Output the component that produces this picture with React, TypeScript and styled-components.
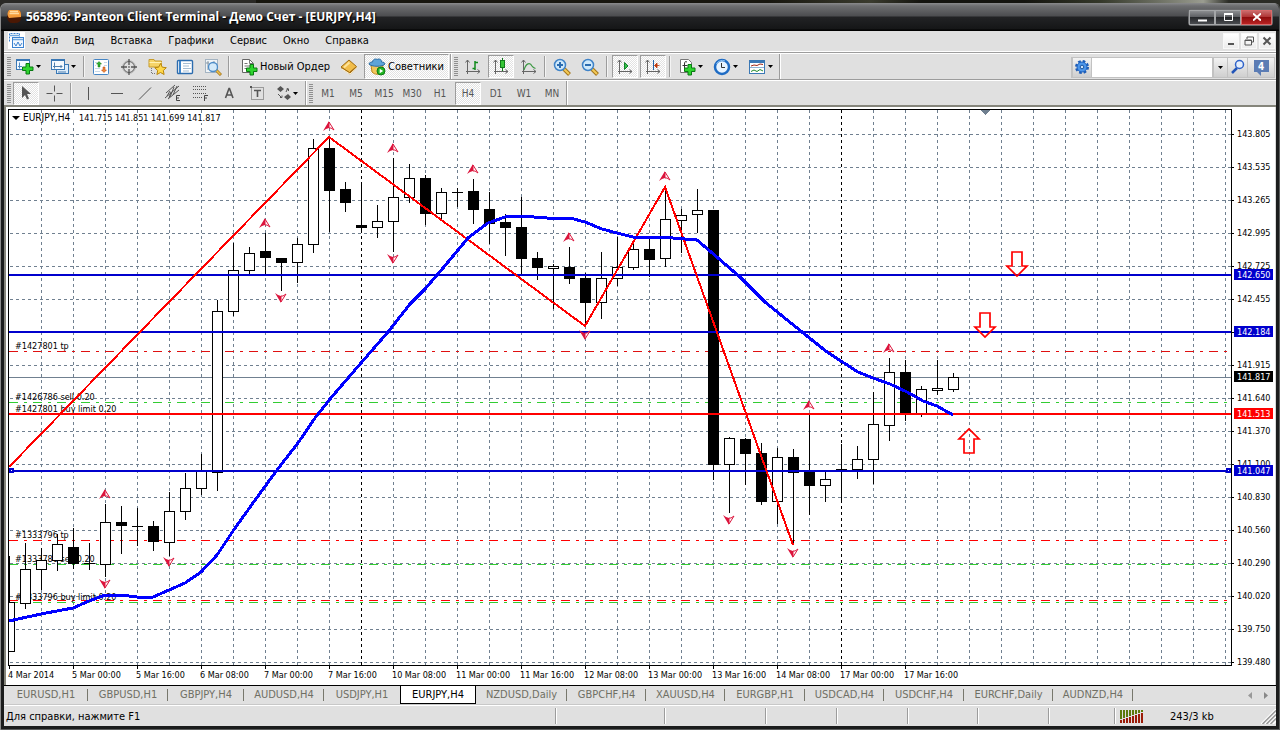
import React from "react";
import styled, { createGlobalStyle, css } from "styled-components";

const UI = '"DejaVu Sans Condensed", "DejaVu Sans", "Noto Sans", sans-serif';
const FACE = "#e0e0e0";
const SHADE = "#9c9c9c";

const GlobalStyle = createGlobalStyle`
  * { box-sizing: border-box; }
  html, body, #root { margin: 0; min-height: 100%; }
  body { background: #1c1c1c; font-family: ${UI}; font-size: 11px; color: #000; }
  button, input { font: inherit; color: inherit; margin: 0; padding: 0; border: 0; background: none; }
  svg { display: block; flex: none; }
`;

/* ---------- window frame ---------- */

const Desktop = styled.div`
  min-height: 100vh;
  padding-top: 3px;
  display: flex;
  flex-direction: column;
  background: linear-gradient(90deg, #2a2926 0 20%, #17160f 20% 60%, #3a3b2e 68%, #14140f 72% 80%, #34382a 86%, #9a9c90 94%, #2b2c26 96%);
`;
const Frame = styled.div`
  flex: 1;
  display: flex;
  flex-direction: column;
  padding: 0 4px 4px;
  border-radius: 6px 6px 0 0;
  background: #1b1c1c;
  box-shadow: inset 1px 1px 0 #8c8c8c, inset -1px -1px 0 #5a5c5c;
`;
const TitleBar = styled.header`
  height: 28px;
  margin: 0 -3px;
  padding: 0 5px;
  display: flex;
  align-items: center;
  gap: 2px;
  border-radius: 6px 6px 0 0;
  background: linear-gradient(#8a8b8d 0, #6d6e70 3px, #4c4d50 13px, #222325 14px, #151617 26px, #000 27px);
`;
const Title = styled.h1`
  margin: 0;
  flex: 1;
  font-family: "Open Sans", "Noto Sans", sans-serif;
  font-size: 12px;
  line-height: 16px;
  font-weight: 700;
  color: #fff;
  text-shadow: 1px 1px 1px #000;
  white-space: nowrap;
`;
const Controls = styled.div`
  display: flex;
  margin-right: 1px;
  border: 1px solid #6a6b6d;
  border-radius: 3px;
`;
const ControlButton = styled.button<{ $close?: boolean }>`
  width: ${(p) => (p.$close ? 31 : 26)}px;
  height: 15px;
  display: grid;
  place-items: center;
  border: 1px solid ${(p) => (p.$close ? "#d86a6a" : "#a4a6a8")};
  background: ${(p) =>
    p.$close
      ? "linear-gradient(#c96a6a 0, #b03434 45%, #8f0d0d 50%, #b82222 100%)"
      : "linear-gradient(#8b8d90 0, #5d5f63 45%, #26282b 50%, #4a4c50 100%)"};
`;

/* ---------- menu ---------- */

const MenuBar = styled.nav`
  height: 22px;
  padding: 0 1px 2px 4px;
  display: flex;
  align-items: center;
  background: ${FACE};
  border-bottom: 1px solid ${SHADE};
  box-shadow: inset 0 -1px 0 #fff;
`;
const MenuItems = styled.div`
  flex: 1;
  display: flex;
  gap: 16px;
  padding-left: 6px;
`;
const MenuItem = styled.button`
  font-size: 11px;
  line-height: 16px;
`;
const MdiButton = styled.button`
  width: 16px;
  height: 16px;
  margin-left: 2px;
  display: grid;
  place-items: center;
  background: linear-gradient(#fff, #ececec);
  border: 1px solid #f8f8f8;
`;

/* ---------- toolbars ---------- */

const ToolRow = styled.div`
  height: 27px;
  display: flex;
  align-items: stretch;
  background: ${FACE};
  border-top: 1px solid #fff;
  border-bottom: 1px solid ${SHADE};
`;
const ToolRowLast = styled(ToolRow)`
  border-bottom: 2px solid #85857b;
`;
const Band = styled.div`
  display: flex;
  align-items: center;
  padding-left: 3px;
  border-right: 1px solid ${SHADE};
  box-shadow: 1px 0 0 #fff;
`;
const BandNext = styled(Band)`
  padding-left: 3px;
`;
const Grip = styled.span`
  width: 4px;
  height: 19px;
  margin-right: 1px;
  background: repeating-linear-gradient(#8f8f8f 0 1px, ${FACE} 1px 2px);
`;
const Sep = styled.span<{ $wide?: boolean }>`
  width: 2px;
  height: 21px;
  margin: ${(p) => (p.$wide ? "0 3px 0 2px" : "0 2px 0 1px")};
  background: linear-gradient(90deg, ${SHADE} 0 1px, #f4f4f4 1px 2px);
`;
const pressed = css`
  background: repeating-conic-gradient(#ffffff 0 25%, #e2e2e2 0 50%) 0 0 / 2px 2px;
  border: 1px solid;
  border-color: ${SHADE} #fff #fff ${SHADE};
`;
const ToolButton = styled.button<{ $pressed?: boolean }>`
  width: 26px;
  height: 23px;
  margin: 0 1px;
  display: flex;
  align-items: center;
  justify-content: center;
  border: 1px solid transparent;
  color: #555;
  ${(p) => p.$pressed && pressed}
`;
const PeriodButton = styled(ToolButton)`
  font-size: 10px;
`;
const DropButton = styled.button<{ $compact?: boolean }>`
  width: ${(p) => (p.$compact ? 34 : 35)}px;
  height: 23px;
  padding-left: 4px;
  display: flex;
  align-items: center;
  gap: ${(p) => (p.$compact ? 0 : 2)}px;
`;
const LabelButton = styled.button<{ $pressed?: boolean }>`
  height: 25px;
  padding: 0 ${(p) => (p.$pressed ? 4 : 5)}px 0 ${(p) => (p.$pressed ? 3 : 8)}px;
  margin: 0 ${(p) => (p.$pressed ? 1 : 0)}px;
  display: flex;
  align-items: center;
  gap: 2px;
  font-size: 11px;
  white-space: nowrap;
  ${(p) => p.$pressed && pressed}
`;
const SearchGroup = styled.div`
  margin: 1px 1px 0 auto;
  height: 21px;
  align-self: center;
  display: flex;
  border: 1px solid #c2c2c2;
`;
const SearchInput = styled.input`
  width: 122px;
  background: #fff;
  border: solid #c2c2c2;
  border-width: 0 1px;
`;
const SearchButton = styled.button<{ $w: number }>`
  width: ${(p) => p.$w}px;
  display: grid;
  place-items: center;
  background: linear-gradient(#f2f2f2, #cfcfcf);
  border-left: 1px solid #c2c2c2;
`;

/* ---------- chart, tabs, status ---------- */

const ChartPane = styled.main`
  flex: 1;
  background: #fff;
  border-left: 2px solid #85857b;
  border-right: 1px solid #d8d8d8;
`;
const ChartSvg = styled.svg`
  width: 100%;
  height: auto;
  font-family: ${UI};
  font-size: 9px;
`;
const TabStrip = styled.div`
  height: 20px;
  display: flex;
  background: ${FACE};
  border-top: 1px solid #000;
  box-shadow: inset 0 -1px 0 #c8c8c8;
`;
const Tab = styled.button<{ $w: number; $active?: boolean; $bare?: boolean }>`
  width: ${(p) => p.$w}px;
  height: 18px;
  position: relative;
  font-size: 11px;
  line-height: 16px;
  color: #6f6f64;
  white-space: nowrap;
  &::after {
    content: "";
    position: absolute;
    right: 0;
    top: 3px;
    width: 1px;
    height: 12px;
    background: ${(p) => (p.$bare ? "none" : "#77776c")};
  }
  ${(p) =>
    p.$active &&
    css`
      color: #000;
      background: #fff;
      border: solid #000;
      border-width: 0 1px 1px;
      &::after { content: none; }
    `}
`;
const TabScroll = styled.div`
  margin: 0 8px 0 auto;
  display: flex;
  align-items: center;
  gap: 12px;
`;
const StatusBar = styled.footer`
  height: 21px;
  display: flex;
  align-items: center;
  background: ${FACE};
  border-top: 1px solid #fff;
`;
const StatusText = styled.span`
  flex: 1;
  padding-left: 2px;
  font-size: 11px;
`;
const StatusCell = styled.span<{ $w: number }>`
  width: ${(p) => p.$w}px;
  height: 16px;
  display: flex;
  align-items: center;
  border-left: 1px solid ${SHADE};
  box-shadow: inset 1px 0 0 #fff;
`;
const Traffic = styled.span`
  flex: 1;
  padding-left: 27px;
`;
const SizeGrip = styled.svg`
  align-self: flex-end;
`;

/* ---------- icons ---------- */

const Svg = ({ w = 18, h = 18, children }: { w?: number; h?: number; children: React.ReactNode }) => (
  <svg width={w} height={h} viewBox={`0 0 ${w} ${h}`} fill="none" aria-hidden="true">
    {children}
  </svg>
);
const Caret = () => (
  <Svg w={5} h={3}>
    <path d="M0 0h5L2.500 3z" fill="#000" />
  </Svg>
);
const Plus = ({ x, y }: { x: number; y: number }) => (
  <path
    transform={`translate(${x} ${y})`}
    d="M4 .5h3.500V4H11v3.500H7.500V11H4V7.500H.5V4H4z"
    fill="#2ed42e"
    stroke="#087a12"
  />
);
const Axes = () => (
  <path d="M3.500 16V2M1.500 4.500l2-2.500 2 2.500M2 13.500h14M13.500 11.500l2.500 2-2.500 2" stroke="#666" />
);
const Lens = ({ plus }: { plus?: boolean }) => (
  <Svg>
    <path d="M11 11l5.500 5.500" stroke="#a4761c" strokeWidth="4" />
    <path d="M11 11l5 5" stroke="#f4ca58" strokeWidth="2" />
    <circle cx="7" cy="7" r="5.500" fill="#cfe9fb" stroke="#3f83c8" strokeWidth="1.500" />
    <path d={plus ? "M4 7h6M7 4v6" : "M4 7h6"} stroke="#2b6cb0" strokeWidth="2" />
  </Svg>
);

const icons = {
  chartNew: (
    <Svg>
      <rect x=".5" y="1.500" width="13" height="10" fill="#f2f9ff" stroke="#3a78b5" />
      <path d="M1 2.500h12" stroke="#3a78b5" />
      <path d="M3.500 4.500v6M2 8.500h4" stroke="#4e88c0" />
      <Plus x={6} y={5} />
    </Svg>
  ),
  profiles: (
    <Svg>
      <rect x="5.500" y="6.500" width="12" height="9" fill="#dcecfa" stroke="#3a78b5" />
      <rect x=".5" y="1.500" width="13" height="10" fill="#f5faff" stroke="#3a78b5" />
      <path d="M1 2.500h12" stroke="#3a78b5" />
      <path d="M3.500 4.500v6M2 8.500h9M9.500 7L11 8.500 9.500 10M7 14h8" stroke="#4f7fae" />
    </Svg>
  ),
  market: (
    <Svg>
      <rect x="1.500" y="1.500" width="15" height="15" rx="1" fill="#fff" stroke="#4585c4" />
      <path d="M3 4.500h2M3 7.500h1M3 10.500h5M3 13.500h5M12 4.500h3M12 7.500h3" stroke="#c6d8e8" />
      <path d="M7 3.500l2.500 2.500H8v3H6V6H4.500z" fill="#2fb12f" stroke="#147614" strokeWidth=".5" />
      <path d="M12 14.500L9.500 12H11V9h2v3h1.500z" fill="#f08a3a" stroke="#b53f0c" strokeWidth=".5" />
    </Svg>
  ),
  target: (
    <Svg>
      <circle cx="9" cy="9" r="5.500" stroke="#555" />
      <circle cx="9" cy="9" r="6.500" stroke="#aaa" strokeWidth=".6" />
      <path d="M9 1v6M9 11v6M1 9h6M11 9h6" stroke="#555" strokeWidth="1.300" />
      <circle cx="9" cy="9" r="1" fill="#777" />
    </Svg>
  ),
  favorites: (
    <Svg w={19}>
      <path d="M1 1.500h5l1 1.500h6.500v6H1z" fill="#f6d468" stroke="#c79c2c" />
      <path d="M1.500 4.500h12" stroke="#fff2b4" />
      <path d="M3.500 10v5.500H8" stroke="#777" strokeDasharray="1 1" />
      <path d="M12.500 5.500l1.800 3.700 4 .5-3 2.800.8 4-3.600-2-3.600 2 .8-4-3-2.800 4-.5z" fill="#ffd84a" stroke="#b8860b" />
    </Svg>
  ),
  navigator: (
    <Svg>
      <rect x="1.500" y="2.500" width="15" height="13" rx="1" fill="#fff" stroke="#2c6cae" strokeWidth="1.400" />
      <path d="M4 3v12" stroke="#3f86ca" strokeWidth="2" />
      <path d="M7 5.500h8M7 8h6M7 10.500h8M7 13h6" stroke="#a6bdd2" />
    </Svg>
  ),
  tester: (
    <Svg>
      <rect x="1.500" y="1.500" width="12" height="13" fill="#f0f4f7" stroke="#a4b4c2" />
      <path d="M4 3v9M2 5h3M10 3v3" stroke="#8796a3" />
      <path d="M12 12l5 5" stroke="#a4761c" strokeWidth="3" />
      <path d="M12 12l4.500 4.500" stroke="#f0c14b" strokeWidth="1.500" />
      <circle cx="9" cy="9" r="4.500" fill="#cfe8fa" fillOpacity=".85" stroke="#4d8cc8" strokeWidth="1.300" />
    </Svg>
  ),
  order: (
    <Svg>
      <path d="M2.500 1.500h7l4 4v9h-11z" fill="#fff" stroke="#666" />
      <path d="M9.500 1.500v4h4M4.500 5.500h3M4.500 8h6M4.500 10.500h4" stroke="#777" />
      <Plus x={6} y={6} />
    </Svg>
  ),
  book: (
    <Svg>
      <path d="M1 10L9 2.500l8 7-7 7z" fill="#a86e14" />
      <path d="M1 9l8-7 7.500 6.500-7 6z" fill="#f1bd4a" stroke="#a06c12" />
      <path d="M4 9.500l5.500-5" stroke="#fde39a" strokeWidth="2" />
      <path d="M2 11l8 5 7-6.500" stroke="#fff3cf" />
    </Svg>
  ),
  expert: (
    <Svg>
      <path d="M3 7h12l-1 7c-3 3-7 3-10 0z" fill="#f2c65b" stroke="#b9851c" />
      <path d="M1 6c0-1.500 2-2 3.500-2C5 1 7.500.5 9 1.500 11 .5 13.500 1 13.500 4 15.500 4 17 5 17 6c-2 3-14 3-16 0z" fill="#5ea4d8" stroke="#2d6da3" />
      <circle cx="13" cy="13" r="4" fill="#22b422" stroke="#0c7a14" />
      <path d="M11.700 10.700v4.600l3.500-2.300z" fill="#fff" />
    </Svg>
  ),
  bars: (
    <Svg>
      <Axes />
      <path d="M11 3v9M8.500 10.500H11M11 4.500h3" stroke="#128a1c" strokeWidth="1.500" />
    </Svg>
  ),
  candles: (
    <Svg>
      <Axes />
      <path d="M10.500 0v13" stroke="#117a1a" />
      <rect x="8.500" y="2.500" width="4" height="7" fill="#35c535" stroke="#117a1a" />
    </Svg>
  ),
  line: (
    <Svg>
      <Axes />
      <path d="M4 12c2-7 6-8 8-4 1 1.500 2 2 3.500 2.500" stroke="#3f9a46" strokeWidth="1.300" />
    </Svg>
  ),
  zoomIn: <Lens plus />,
  zoomOut: <Lens />,
  autoscroll: (
    <Svg>
      <Axes />
      <path d="M8.500 4.500v7L12 8z" fill="#35c04a" stroke="#128228" />
    </Svg>
  ),
  shift: (
    <Svg>
      <Axes />
      <path d="M9.500 2v10" stroke="#2464a8" />
      <path d="M15.500 7.500H11M13 5v5l-2.500-2.500z" fill="#bf3a0c" stroke="#bf3a0c" strokeWidth=".8" />
    </Svg>
  ),
  indicators: (
    <Svg>
      <path d="M2.500 1.500h8l3 3v10h-11z" fill="#fff" stroke="#777" />
      <path d="M9 4c-2-1-2.500 0-2.500 2v6M4.500 7.500h5" stroke="#333" />
      <Plus x={6} y={6} />
    </Svg>
  ),
  clock: (
    <Svg>
      <circle cx="9" cy="9" r="7" fill="#e8f4ff" stroke="#1f6cc4" strokeWidth="2.500" />
      <path d="M3.500 6A6.500 6.500 0 0 1 12 3" stroke="#8fc4f4" />
      <path d="M8.500 5v4.500H12" stroke="#333" />
    </Svg>
  ),
  template: (
    <Svg>
      <rect x="1.500" y="2.500" width="15" height="13" fill="#fff" stroke="#3a78b5" />
      <path d="M2 4h14" stroke="#3a78b5" strokeWidth="2" />
      <path d="M2 9.500h14" stroke="#8fb4d6" />
      <path d="M3 8l3-1 3 .5L12 6l3 .5" stroke="#a02818" />
      <path d="M3 13.500l3-1.500 3 1.500 3-2 3 1.500" stroke="#218a2a" />
    </Svg>
  ),
  cursor: (
    <Svg>
      <path d="M5 2v12l3-3 2 4.500 2-1-2-4.500h4z" fill="#555" />
    </Svg>
  ),
  cross: (
    <Svg>
      <path d="M9.500 1.500v6M9.500 11.500v6M1.500 9.500h6M11.500 9.500h6" stroke="#555" />
    </Svg>
  ),
  vline: (
    <Svg>
      <path d="M8.500 3v13" stroke="#555" />
    </Svg>
  ),
  hline: (
    <Svg>
      <path d="M3 9.500h12" stroke="#555" />
    </Svg>
  ),
  trend: (
    <Svg>
      <path d="M3 15.500L15 3.500" stroke="#555" />
    </Svg>
  ),
  channel: (
    <Svg>
      <path d="M1 14L15 2M2 9l9-8M4 15l11-9M3 12l3-5M6 13l4-10M9 11l4-9M5 14l2-6" stroke="#555" />
      <path d="M16 11.500h-3.500v5H16M12.500 14H15" stroke="#444" />
    </Svg>
  ),
  fibo: (
    <Svg>
      <path d="M1 2.500h14M1 5.500h14M1 9.500h14M1 13.500h9" stroke="#555" strokeDasharray="1 1" />
      <path d="M16 11.500h-3.500V17M12.500 14H15" stroke="#444" />
    </Svg>
  ),
  letter: (
    <Svg>
      <path d="M5.500 14L9 4.500h.5L13 14M6.800 11h5" stroke="#555" strokeWidth="1.600" />
    </Svg>
  ),
  label: (
    <Svg>
      <rect x="3.500" y="3.500" width="12" height="12" stroke="#555" strokeDasharray="1 1" />
      <path d="M2 2h2v2H2z" fill="#555" />
      <path d="M6 6.500h7M9.500 6.500V13" stroke="#555" strokeWidth="1.600" />
    </Svg>
  ),
  shapes: (
    <Svg>
      <path d="M5.500 2L9 5 5.500 8 2 5zM13 10l3 3-3.500 3L9 13z" fill="#555" />
      <path d="M3 10l3 3M5 13.500h2v-2M11 8l2-4M11.500 5h2v2" stroke="#555" />
    </Svg>
  ),
  gear: (
    <Svg>
      <circle cx="9" cy="9" r="5.500" stroke="#1d5cb8" strokeWidth="3" strokeDasharray="2.500 1.820" />
      <circle cx="9" cy="9" r="5" fill="#4d96ea" stroke="#1e62be" />
      <circle cx="9" cy="9" r="1.800" fill="#cfe4fa" stroke="#1b559f" />
    </Svg>
  ),
  search: (
    <Svg w={16} h={16}>
      <path d="M7 9l-5 5" stroke="#2255b8" strokeWidth="2.500" />
      <circle cx="9.500" cy="5.500" r="4" fill="#e4eefc" stroke="#2f62c8" strokeWidth="1.500" />
    </Svg>
  ),
  appLogo: (
    <Svg>
      <path d="M3 2h9q3 0 3 5v3q0 5-6 5H6q-4 0-5-6z" fill="#4a1804" />
      <path d="M3 2h9q3 0 3 5v2L3 10Q0 6 3 2z" fill="#f59b3a" />
      <path d="M4 3.500h8M3.500 5.500H13" stroke="#ffd9a0" strokeWidth="1.300" />
    </Svg>
  ),
  chartWindow: (
    <Svg w={17} h={17}>
      <rect width="17" height="17" fill="#fff" />
      <path d="M1.500 9.500v-8h10v4" stroke="#3b82d0" strokeDasharray="2 1" />
      <rect x="4.500" y="5.500" width="11" height="10" fill="#f2f8ff" stroke="#3b82d0" />
      <path d="M2 3.500h9M5 7.500h10" stroke="#6fa8e0" strokeWidth="1.500" />
      <path d="M6 11l2 3 2-4 2 4 2-3" stroke="#3b82d0" />
    </Svg>
  ),
};
type IconName = keyof typeof icons;

const Tool = ({ icon, label, on }: { icon: IconName; label: string; on?: boolean }) => (
  <ToolButton $pressed={on} aria-label={label} aria-pressed={on}>
    {icons[icon]}
  </ToolButton>
);
const Drop = ({ icon, label, compact }: { icon: IconName; label: string; compact?: boolean }) => (
  <DropButton aria-label={label} $compact={compact}>
    {icons[icon]}
    <Caret />
  </DropButton>
);

/* ---------- chart data: [high, low, bodyTop, bodyBottom, filled] per 16px bar ---------- */

type Bar = [number, number, number, number, 0 | 1];
const bars: Bar[] = [
  [556, 651, 602, 651, 0], [543, 608, 569, 603, 0], [548, 589, 560, 569, 0], [534, 570, 544, 560, 0],
  [528, 568, 547, 563, 1], [543, 569, 563, 563, 1], [504, 576, 522, 564, 0], [506, 553, 522, 525, 1],
  [508, 545, 526, 526, 1], [521, 550, 526, 541, 1], [492, 555, 511, 542, 0], [473, 519, 488, 511, 0],
  [454, 494, 471, 488, 0], [300, 490, 311, 472, 0], [243, 315, 270, 311, 0], [247, 274, 253, 270, 0],
  [233, 274, 251, 257, 1], [258, 290, 258, 262, 1], [238, 282, 244, 262, 0], [139, 252, 148, 244, 0],
  [137, 231, 148, 190, 1], [182, 211, 189, 202, 1], [185, 231, 225, 227, 1], [205, 237, 221, 227, 0],
  [158, 251, 197, 221, 0], [164, 202, 178, 197, 0], [175, 224, 178, 213, 1], [188, 218, 192, 213, 0],
  [188, 206, 192, 192, 1], [179, 223, 191, 209, 1], [192, 243, 209, 223, 1], [214, 255, 222, 227, 1],
  [197, 274, 227, 258, 1], [252, 279, 258, 267, 1], [264, 308, 266, 268, 0], [247, 283, 267, 278, 1],
  [273, 325, 278, 302, 1], [252, 318, 278, 302, 0], [237, 285, 267, 278, 0], [243, 269, 249, 267, 0],
  [236, 276, 249, 259, 1], [190, 266, 219, 258, 0], [209, 252, 215, 220, 0], [189, 232, 210, 214, 0],
  [210, 479, 210, 464, 1], [437, 512, 438, 464, 0], [438, 484, 439, 453, 1], [443, 504, 453, 501, 1],
  [448, 523, 457, 501, 0], [449, 543, 457, 472, 1], [414, 514, 471, 485, 1], [471, 501, 479, 485, 0],
  [444, 501, 469, 469, 1], [446, 478, 459, 469, 0], [392, 483, 424, 459, 0], [358, 440, 372, 425, 0],
  [360, 420, 372, 413, 1], [386, 416, 389, 413, 0], [360, 394, 388, 390, 0], [373, 391, 377, 389, 0],
];
const movingAverage =
  "9,621 41,614 73,608 89,601 105,595 121,595 137,597 153,597 169,590 185,583 201,572 217,555 233,531 253,503 277,470 298,443 315,418 330,399 361,363 388,332 410,304 425,289 443,268 468,238 488,223 505,217 520,216 547,218 570,218 585,222 602,229 617,233 633,237 650,237 673,238 697,240 718,258 740,277 765,302 802,332 827,352 858,372 873,378 890,384 907,392 923,401 937,406 953,415";
const zigzag = "9,467 329,137 585,326 665,187 793,545";
const fractalsUp = [[105, 494], [265, 223], [329, 126], [393, 148], [473, 169], [569, 237], [665, 176], [809, 405], [889, 348]];
const fractalsDown = [[105, 584], [169, 562], [281, 298], [393, 259], [585, 335], [729, 520], [793, 553]];
const prices = ["143.805", "143.535", "143.265", "142.995", "142.725", "142.455", "", "141.915", "141.640", "141.370", "141.100", "140.830", "140.560", "140.290", "140.020", "139.750", "139.480"];
const dates = ["4 Mar 2014", "5 Mar 00:00", "5 Mar 16:00", "6 Mar 08:00", "7 Mar 00:00", "7 Mar 16:00", "10 Mar 08:00", "11 Mar 00:00", "11 Mar 16:00", "12 Mar 08:00", "13 Mar 00:00", "13 Mar 16:00", "14 Mar 08:00", "17 Mar 00:00", "17 Mar 16:00"];
const orders: [string, number][] = [
  ["#1427801 tp", 349], ["#1426786 sell 0.20", 400], ["#1427801 buy limit 0.20", 412],
  ["#1333796 tp", 538], ["#1333786 sell 0.20", 562], ["#1333796 buy limit 0.20", 600],
];
const orderLines: [number, string][] = [[351, "#e01010"], [540, "#ff0000"], [600, "#ff0000"], [402, "#32cd32"], [564, "#32cd32"], [602, "#32cd32"]];
const levels: [number, string][] = [[274, "#0000cd"], [331, "#0000cd"], [413, "#ff0000"], [470, "#0000cd"]];
const tags: [string, number, string][] = [
  ["142.650", 269, "#0000cd"], ["142.184", 326, "#0000cd"], ["141.817", 371, "#000000"],
  ["141.513", 408, "#ff0000"], ["141.047", 465, "#0000cd"],
];
const columns = Array.from({ length: 38 }, (_, i) => 41 + i * 32);

const Fractal = ({ x, y, down }: { x: number; y: number; down?: boolean }) => (
  <g transform={`translate(${x} ${y}) scale(1 ${down ? -1 : 1})`}>
    <path d="M0-5L-6 5l3-2L0 2z" fill="#dc143c" />
    <path d="M0-4L5 4 2 2H0z" fill="#fff" stroke="#dc143c" />
  </g>
);
const BigArrow = ({ x, y, up }: { x: number; y: number; up?: boolean }) => (
  <g transform={`translate(${x} ${y}) scale(1 ${up ? -1 : 1})`}>
    <path d="M-5-12H5V2h5L0 12-10 2h5z" fill="none" stroke="#ff0000" strokeWidth="1.700" />
  </g>
);

const Chart = () => (
  <ChartSvg viewBox="6 107 1269 578" role="img" aria-label="EURJPY H4">
    <g shapeRendering="crispEdges">
      <g stroke="#708090" strokeDasharray="3 3">
        {columns.map((x) => (
          <path key={x} d={`M${x}.500 110V665`} stroke={x === 361 || x === 841 ? "#000" : undefined} />
        ))}
        {prices.map((_, i) => (
          <path key={i} d={`M10 ${134 + i * 33}.500H1231`} />
        ))}
      </g>
      {orderLines.map(([y, color]) => (
        <path key={y} d={`M9 ${y}.500H1228`} stroke={color} strokeDasharray="9 6 3 6" />
      ))}
      <path d="M9 377.500H1231" stroke="#708090" />
    </g>
    {orders.map(([text, y]) => (
      <text key={text} x={15} y={y}>{text}</text>
    ))}
    <g shapeRendering="crispEdges">
      {bars.map(([high, low, top, bottom, filled], i) => {
        const x = 9 + i * 16;
        const left = Math.max(x - 5, 8);
        return (
          <g key={x}>
            <path d={`M${x}.500 ${high}V${low + 1}`} stroke="#000" />
            {bottom === top ? (
              <path d={`M${left} ${top}.500H${x + 6}`} stroke="#000" />
            ) : (
              <rect x={left + 0.5} y={top + 0.5} width={x + 5 - left} height={bottom - top} fill={filled ? "#000" : "#fff"} stroke="#000" />
            )}
          </g>
        );
      })}
      {levels.map(([y, color]) => (
        <rect key={y} x={9} y={y} width={1222} height={2} fill={color} />
      ))}
      <polyline points={zigzag} fill="none" stroke="#ff0000" strokeWidth="2" />
      <polyline points={movingAverage} fill="none" stroke="#0000ff" strokeWidth="3" />
      <rect x="10" y="469" width="3" height="3" fill="#fff" stroke="#0000cd" strokeWidth="2" />
      <rect x="1227" y="469" width="3" height="3" fill="#fff" stroke="#0000cd" strokeWidth="2" />
      <path d="M8.500 665.500V109.500H1231.500V665.500z" fill="none" stroke="#000" />
      <path d="M980 110h11l-5.500 5z" fill="#708090" />
      {prices.map((_, i) => (
        <path key={i} d={`M1232 ${134 + i * 33}.500h2`} stroke="#000" />
      ))}
      {dates.map((d, i) => (
        <path key={d} d={`M${9 + i * 64}.500 666v3`} stroke="#000" />
      ))}
    </g>
    {fractalsUp.map(([x, y]) => <Fractal key={`${x}u`} x={x} y={y} />)}
    {fractalsDown.map(([x, y]) => <Fractal key={`${x}d`} x={x} y={y} down />)}
    <BigArrow x={1017} y={264} />
    <BigArrow x={985} y={325} />
    <BigArrow x={969} y={441} up />
    <rect x="10" y="113" width="212" height="10" fill="#fff" />
    <path d="M12 116h8l-4 4z" fill="#000" />
    <text x="23" y="121" fontSize="10">EURJPY,H4</text>
    <text x="79" y="121">141.715 141.851 141.699 141.817</text>
    {prices.map((p, i) => (
      <text key={i} x="1237" y={137 + i * 33}>{p}</text>
    ))}
    {tags.map(([p, y, color]) => (
      <g key={p}>
        <rect x="1234" y={y} width="39" height="11" fill={color} />
        <text x="1237" y={y + 9} fill="#fff">{p}</text>
      </g>
    ))}
    {dates.map((d, i) => (
      <text key={d} x={8 + i * 64} y="678">{d}</text>
    ))}
  </ChartSvg>
);

const tabs: [string, number][] = [
  ["EURUSD,H1", 84], ["GBPUSD,H1", 80], ["GBPJPY,H4", 76], ["AUDUSD,H4", 80], ["USDJPY,H1", 76], ["EURJPY,H4", 76],
  ["NZDUSD,Daily", 91], ["GBPCHF,H4", 79], ["XAUUSD,H4", 79], ["EURGBP,H1", 80], ["USDCAD,H4", 79], ["USDCHF,H4", 80],
  ["EURCHF,Daily", 89], ["AUDNZD,H4", 80],
];
const menu = ["Файл", "Вид", "Вставка", "Графики", "Сервис", "Окно", "Справка"];
const periods = ["M1", "M5", "M15", "M30", "H1", "H4", "D1", "W1", "MN"];

export default function App() {
  return (
    <Desktop>
      <GlobalStyle />
      <Frame>
        <TitleBar>
          {icons.appLogo}
          <Title>565896: Panteon Client Terminal - Демо Счет - [EURJPY,H4]</Title>
          <Controls>
            <ControlButton aria-label="Minimize">
              <Svg w={9} h={9}><path d="M0 7.500h9" stroke="#fff" strokeWidth="2" /></Svg>
            </ControlButton>
            <ControlButton aria-label="Maximize">
              <Svg w={9} h={8}><path d="M.5 1h8v6.500h-8z" stroke="#fff" /><path d="M0 1h9" stroke="#fff" strokeWidth="2" /></Svg>
            </ControlButton>
            <ControlButton $close aria-label="Close">
              <Svg w={8} h={8}><path d="M0 .5l8 7M8 .5l-8 7" stroke="#fff" strokeWidth="2" /></Svg>
            </ControlButton>
          </Controls>
        </TitleBar>

        <MenuBar>
          {icons.chartWindow}
          <MenuItems>
            {menu.map((m) => <MenuItem key={m}>{m}</MenuItem>)}
          </MenuItems>
          <MdiButton aria-label="Minimize chart">
            <Svg w={10} h={10}><path d="M2 8h6" stroke="#555" strokeWidth="2" /></Svg>
          </MdiButton>
          <MdiButton aria-label="Restore chart">
            <Svg w={10} h={10}><path d="M3 3V1h6.500v5H8M1 4h6.500v5H1zM1 4.500h6" stroke="#555" /></Svg>
          </MdiButton>
          <MdiButton aria-label="Close chart">
            <Svg w={10} h={10}><path d="M1.500 1.500l7 7M8.500 1.500l-7 7" stroke="#555" strokeWidth="2" /></Svg>
          </MdiButton>
        </MenuBar>

        <ToolRow>
          <Band>
            <Grip />
            <Drop icon="chartNew" label="Новый график" />
            <Drop icon="profiles" label="Профили" />
            <Sep />
            <Tool icon="market" label="Обзор рынка" />
            <Tool icon="target" label="Окно данных" />
            <Tool icon="favorites" label="Навигатор" />
            <Tool icon="navigator" label="Терминал" />
            <Tool icon="tester" label="Тестер" />
            <Sep />
            <LabelButton>{icons.order}Новый Ордер</LabelButton>
            <Tool icon="book" label="MetaEditor" />
            <LabelButton $pressed>{icons.expert}Советники</LabelButton>
          </Band>
          <BandNext>
            <Grip />
            <Tool icon="bars" label="Бары" />
            <Tool icon="candles" label="Японские свечи" on />
            <Tool icon="line" label="Линия" />
            <Sep />
            <Tool icon="zoomIn" label="Увеличить" />
            <Tool icon="zoomOut" label="Уменьшить" />
            <Sep $wide />
            <Tool icon="autoscroll" label="Автопрокрутка" on />
            <Tool icon="shift" label="Сдвиг графика" on />
            <Sep $wide />
            <Drop icon="indicators" label="Индикаторы" />
            <Drop icon="clock" label="Периоды" />
            <Drop icon="template" label="Шаблоны" />
          </BandNext>
          <SearchGroup>
            <SearchButton $w={19} aria-label="Настройки">{icons.gear}</SearchButton>
            <SearchInput aria-label="Поиск" />
            <SearchButton $w={14} aria-label="История"><Caret /></SearchButton>
            <SearchButton $w={20} aria-label="Найти">{icons.search}</SearchButton>
            <SearchButton $w={27} aria-label="Сообщения">
              <svg width="17" height="17" viewBox="0 0 17 17" aria-hidden="true">
                <path d="M1 1h15v12H8v4l-4-4H1z" fill="#5b7cb4" />
                <text x="5" y="11" fontSize="10" fontWeight="700" fill="#fff">4</text>
              </svg>
            </SearchButton>
          </SearchGroup>
        </ToolRow>

        <ToolRowLast>
          <Band>
            <Grip />
            <Tool icon="cursor" label="Курсор" on />
            <Tool icon="cross" label="Перекрестие" />
            <Sep $wide />
            <Tool icon="vline" label="Вертикальная линия" />
            <Tool icon="hline" label="Горизонтальная линия" />
            <Tool icon="trend" label="Трендовая линия" />
            <Tool icon="channel" label="Канал" />
            <Tool icon="fibo" label="Фибоначчи" />
            <Tool icon="letter" label="Текст" />
            <Tool icon="label" label="Метка" />
            <Drop icon="shapes" label="Стрелки" compact />
          </Band>
          <BandNext>
            <Grip />
            {periods.map((p) => (
              <PeriodButton key={p} $pressed={p === "H4"}>{p}</PeriodButton>
            ))}
          </BandNext>
        </ToolRowLast>

        <ChartPane>
          <Chart />
        </ChartPane>

        <TabStrip role="tablist">
          {tabs.map(([name, w], i) => (
            <Tab key={name} role="tab" $w={w} $active={i === 5} $bare={i === 4} aria-selected={i === 5}>{name}</Tab>
          ))}
          <TabScroll>
            <button aria-label="Назад"><Svg w={4} h={7}><path d="M4 0v7L0 3.500z" fill="#999" /></Svg></button>
            <button aria-label="Вперед"><Svg w={4} h={7}><path d="M0 0v7l4-3.500z" fill="#888" /></Svg></button>
          </TabScroll>
        </TabStrip>

        <StatusBar>
          <StatusText>Для справки, нажмите F1</StatusText>
          <StatusCell $w={109} />
          <StatusCell $w={101} />
          <StatusCell $w={71} />
          <StatusCell $w={71} />
          <StatusCell $w={70} />
          <StatusCell $w={71} />
          <StatusCell $w={66} />
          <StatusCell $w={162}>
            <svg width="28" height="13" viewBox="-5 0 28 13" shapeRendering="crispEdges" aria-hidden="true">
              {Array.from({ length: 8 }, (_, i) => (
                <g key={i}>
                  <rect x={i * 3} y="0" width="2" height={9 - i} fill="#5c7a0a" />
                  <rect x={i * 3} y={10 - i} width="2" height={3 + i} fill="#9c1c08" />
                </g>
              ))}
            </svg>
            <Traffic>243/3 kb</Traffic>
            <SizeGrip width="15" height="15" viewBox="0 0 15 15">
              <path d="M0 15L15 0M4 15L15 4M8 15l7-7M12 15l3-3" stroke="#fff" strokeWidth="1.500" />
              <path d="M1.500 15L15 1.500M5.500 15L15 5.500M9.500 15L15 9.500" stroke="#999" strokeWidth="1.500" />
            </SizeGrip>
          </StatusCell>
        </StatusBar>
      </Frame>
    </Desktop>
  );
}
